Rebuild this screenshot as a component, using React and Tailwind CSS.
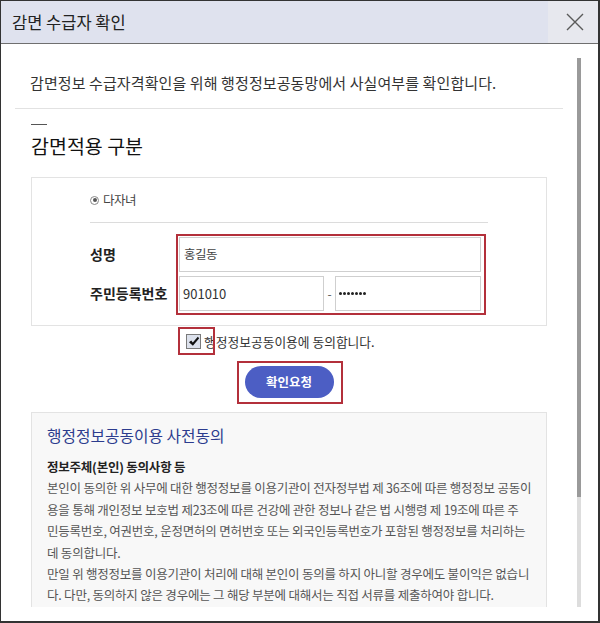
import React from "react";

const consentLines = [
  "본인이 동의한 위 사무에 대한 행정정보를 이용기관이 전자정부법 제 36조에 따른 행정정보 공동이",
  "용을 통해 개인정보 보호법 제23조에 따른 건강에 관한 정보나 같은 법 시행령 제 19조에 따른 주",
  "민등록번호, 여권번호, 운정면허의 면허번호 또는 외국인등록번호가 포함된 행정정보를 처리하는",
  "데 동의합니다.",
  "만일 위 행정정보를 이용기관이 처리에 대해 본인이 동의를 하지 아니할 경우에도 불이익은 없습니",
  "다. 다만, 동의하지 않은 경우에는 그 해당 부분에 대해서는 직접 서류를 제출하여야 합니다.",
];

export default function App() {
  return (
    <div className="w-[600px] h-[623px] bg-white border-l border-t border-r-2 border-b-2 border-[#333] flex flex-col font-['Noto_Sans_CJK_KR',sans-serif] text-[#333]">
      {/* 헤더 */}
      <div className="h-[43px] flex border-b border-[#6f6f6f]">
        <div className="flex-1 bg-[#dfe2ee] flex items-center pl-[11px] text-[16.5px] text-[#222]">
          감면 수급자 확인
        </div>
        <div className="w-[50px] bg-[#e7e8ee] flex items-center justify-center pl-[3px]">
          <svg width="18" height="18" viewBox="0 0 18 18" fill="none" stroke="#5a5a5a" strokeWidth="1.4">
            <path d="M1 1L17 17M17 1L1 17" />
          </svg>
        </div>
      </div>

      {/* 본문 */}
      <div className="h-[563px] flex">
        <div className="w-[575px] overflow-hidden pl-[14px] pr-[13px]">
          <p className="pt-[29px] pl-[15px] text-[15px] leading-[20px] tracking-[0.1px] whitespace-nowrap">
            감면정보 수급자격확인을 위해 행정정보공동망에서 사실여부를 확인합니다.
          </p>
          <div className="mt-[15px] h-px bg-[#e2e2e2]" />

          <div className="mt-[15px] ml-[16px] w-[16px] h-px bg-[#555]" />
          <h2 className="mt-[8px] ml-[16px] text-[19.5px] leading-[26px] text-[#111]">감면적용 구분</h2>

          <div className="mt-[18px] mx-[16px] border border-[#e3e3e3] pl-[58px] pt-[12px] pb-[10px]">
            <div className="h-[20px] flex items-center gap-[4px]">
              <span className="w-[9px] h-[9px] rounded-full border border-[#8a8a8a] flex items-center justify-center">
                <span className="w-[4px] h-[4px] rounded-full bg-[#555]" />
              </span>
              <span className="text-[12.5px] tracking-[-0.5px] text-[#444]">다자녀</span>
            </div>
            <div className="mt-[12px] w-[398px] h-px bg-[#dcdcdc]" />

            <div className="mt-[11px] flex">
              <div className="w-[86px] flex flex-col pt-[3px] gap-[4px] text-[14px] font-bold text-[#222]">
                <div className="h-[35px] flex items-center">성명</div>
                <div className="h-[35px] flex items-center">주민등록번호</div>
              </div>
              <div className="w-[310px] border-2 border-[#b3303b] pl-[1px] pt-[1px] pb-[2px] flex flex-col gap-[4px]">
                <div className="w-[302px] h-[35px] border border-[#cfcfcf] flex items-center pl-[4px] text-[12.5px] tracking-[-0.5px] text-[#444]">
                  홍길동
                </div>
                <div className="w-[302px] h-[35px] flex items-center">
                  <div className="w-[145px] h-full border border-[#cfcfcf] flex items-center pl-[3px] text-[13px] text-[#333]">
                    901010
                  </div>
                  <span className="w-[11px] text-center text-[12px] text-[#555]">-</span>
                  <div className="w-[146px] h-full border border-[#cfcfcf] flex items-center gap-[1px] pl-[3px]">
                    {[0, 1, 2, 3, 4, 5, 6].map((d) => (
                      <span key={d} className="w-[3px] h-[3px] rounded-full bg-[#222]" />
                    ))}
                  </div>
                </div>
              </div>
            </div>
          </div>

          {/* 동의 체크 */}
          <div className="h-[31px] flex items-center pl-[171px]">
            <div className="relative w-[15px] h-[15px] border border-[#7a7a7a] bg-[#dce1ec] flex items-center justify-center">
              <svg width="12" height="11" viewBox="0 0 12 11">
                <path d="M1 6.2L3.2 4.4L4.8 6.6L9.8 0.8L11.2 2.2L4.9 9.8Z" fill="#111" />
              </svg>
              <span className="absolute -left-[9px] -top-[8px] w-[37px] h-[28px] border-2 border-[#b3303b]" />
            </div>
            <span className="ml-[3px] text-[12.75px] text-[#333]">행정정보공동이용에 동의합니다.</span>
          </div>

          <div className="mt-[4px] flex justify-center pl-[1px]">
            <div className="border-2 border-[#b3303b] pl-[6px] pr-[7px] pt-[3px] pb-[4px]">
              <button className="w-[89px] h-[32px] rounded-full bg-[#4c5ec4] text-white text-[12.5px] font-bold">
                확인요청
              </button>
            </div>
          </div>

          {/* 사전동의 */}
          <div className="mt-[8px] mx-[16px] bg-[#f8f8f8] border border-[#e3e3e3] pl-[15px] pt-[13px] pb-[30px]">
            <h3 className="text-[15.75px] leading-[20px] text-[#2c3c8e]">행정정보공동이용 사전동의</h3>
            <div className="mt-[10px] text-[12.5px] leading-[21.4px] tracking-[-0.22px]">
              <div className="font-bold text-[#222]">정보주체(본인) 동의사항 등</div>
              {consentLines.map((line, i) => (
                <div key={i} className="whitespace-nowrap text-[#555]">
                  {line}
                </div>
              ))}
            </div>
          </div>
        </div>

        {/* 스크롤바 */}
        <div className="w-[4px] ml-[1px] pt-[14px] flex flex-col">
          <div className="h-[439px] bg-[#9a9a9a]" />
          <div className="flex-1 bg-[#dddddd]" />
        </div>
      </div>
      <div className="flex-1" />
    </div>
  );
}
